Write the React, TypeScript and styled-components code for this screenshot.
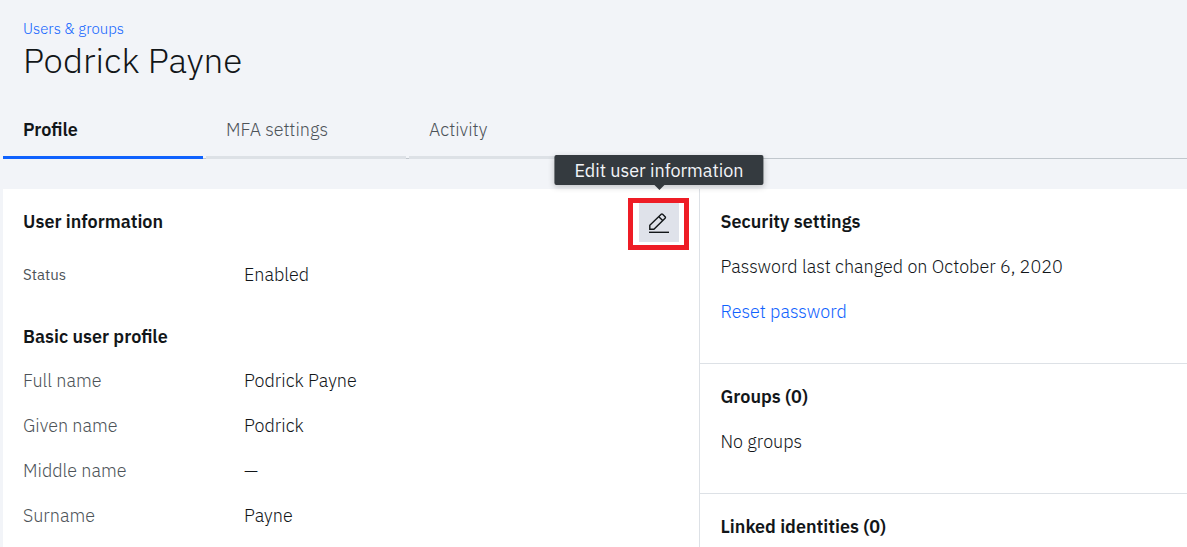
import React from "react";
import styled, { createGlobalStyle } from "styled-components";

const color = {
  page: "#f2f4f8",
  text: "#121619",
  muted: "#4d5358",
  blue: "#0f62fe",
  border: "#dde1e6",
  hover: "#dfe2ea",
  rule: "#c1c7cd",
  tooltip: "#343a3f",
  highlight: "#ee1c25",
};

const GlobalStyle = createGlobalStyle`
  *, *::before, *::after { box-sizing: border-box; }
  body {
    margin: 0;
    background: ${color.page};
    color: ${color.text};
    font-family: "IBM Plex Sans", Roboto, "Liberation Sans", sans-serif;
    font-size: 18px;
    font-weight: 300;
    line-height: 20px;
  }
`;

const Page = styled.div`
  display: flex;
  flex-direction: column;
  min-height: 100vh;
  padding-left: 3px;
`;

const Header = styled.header`
  padding: 19px 20px 0;
`;

const TextLink = styled.a<{ $small?: boolean }>`
  color: ${color.blue};
  text-decoration: none;
  font-size: ${(p) => (p.$small ? 15 : 18)}px;

  &:hover { text-decoration: underline; }
`;

const Breadcrumb = styled.nav`
  display: flex;
`;

const PageTitle = styled.h1`
  margin: 0;
  font-size: 35px;
  font-weight: 300;
  line-height: 42px;
`;

const TabBar = styled.div`
  display: flex;
  gap: 3px;
  margin: 20px 0 30px;
  background: linear-gradient(${color.rule}, ${color.rule}) bottom / 100% 1px no-repeat;
`;

const Tab = styled.button<{ $active?: boolean }>`
  width: 200px;
  padding: 19px 20px 16px;
  border: 0;
  border-bottom: 3px solid ${(p) => (p.$active ? color.blue : color.border)};
  background: none;
  color: ${(p) => (p.$active ? color.text : color.muted)};
  font: inherit;
  font-weight: ${(p) => (p.$active ? 600 : 300)};
  text-align: left;
  cursor: pointer;
`;

const Panels = styled.main`
  display: grid;
  grid-template-columns: 10fr 7fr;
  flex: 1;
  background: #fff;
`;

const Main = styled.section`
  padding: 23px 20px 20px;
`;

const Side = styled.aside`
  border-left: 1px solid ${color.border};
`;

const SideSection = styled.section`
  display: flex;
  flex-direction: column;
  align-items: flex-start;
  gap: 25px;
  padding: 23px 20px 41px;

  & + & { border-top: 1px solid ${color.border}; }
  &:last-child { padding-bottom: 0; }
`;

const Heading = styled.h2`
  margin: 0;
  font-size: 18px;
  font-weight: 600;
  line-height: 20px;
`;

const Text = styled.p`
  margin: 0;
`;

const MainHeader = styled.div`
  display: flex;
  justify-content: space-between;
  height: 20px;
`;

const EditAnchor = styled.div`
  position: relative;
  display: flex;
  align-self: flex-start;
  margin: -14px -10px 0 0;
`;

const Highlight = styled.div`
  padding: 0 5px 3px 6px;
  border: 5px solid ${color.highlight};
`;

const EditButton = styled.button`
  display: flex;
  align-items: center;
  justify-content: center;
  width: 40px;
  height: 39px;
  padding: 0;
  border: 0;
  background: ${color.hover};
  color: ${color.text};
  cursor: pointer;
`;

const Tooltip = styled.span`
  position: absolute;
  bottom: calc(100% + 13px);
  left: 50%;
  transform: translateX(-50%);
  padding: 6px 20px 4px;
  border-radius: 2px;
  background: ${color.tooltip};
  box-shadow: 0 2px 6px rgba(0, 0, 0, 0.2);
  color: #f2f4f8;
  font-weight: 400;
  white-space: nowrap;

  &::after {
    content: "";
    position: absolute;
    top: 100%;
    left: 50%;
    margin-left: -5px;
    border: 5px solid transparent;
    border-top-color: ${color.tooltip};
    border-bottom: 0;
  }
`;

const Fields = styled.dl`
  display: grid;
  gap: 25px;
  margin: 24px 0 0;
`;

const StatusFields = styled(Fields)`
  margin: 33px 0 42px;
`;

const Field = styled.div`
  display: grid;
  grid-template-columns: 221px 1fr;
`;

const Label = styled.dt<{ $small?: boolean }>`
  color: ${color.muted};
  font-size: ${(p) => (p.$small ? 15 : 18)}px;
  font-weight: ${(p) => (p.$small ? 400 : 300)};
`;

const Value = styled.dd`
  margin: 0;
`;

const EditIcon = () => (
  <svg width="20" height="20" viewBox="0 0 20 20" fill="none" stroke="currentColor" aria-hidden="true">
    <path d="M0 19.300h20" strokeWidth="1.400" />
    <path
      d="M.8 16.200v-4L12.200 1.300a1 1 0 0 1 1.400 0l2.500 2.500a1 1 0 0 1 0 1.400L4.900 16.200zM9.800 3.700l3.900 3.900"
      strokeWidth="1.400"
    />
  </svg>
);

const tabs = ["Profile", "MFA settings", "Activity"];

const profile = [
  ["Full name", "Podrick Payne"],
  ["Given name", "Podrick"],
  ["Middle name", "—"],
  ["Surname", "Payne"],
];

export default function App() {
  return (
    <>
      <GlobalStyle />
      <Page>
        <Header>
          <Breadcrumb aria-label="Breadcrumb">
            <TextLink $small href="#users">Users &amp; groups</TextLink>
          </Breadcrumb>
          <PageTitle>Podrick Payne</PageTitle>
        </Header>
        <TabBar role="tablist">
          {tabs.map((name, i) => (
            <Tab key={name} type="button" role="tab" aria-selected={i === 0} $active={i === 0}>
              {name}
            </Tab>
          ))}
        </TabBar>
        <Panels>
          <Main>
            <MainHeader>
              <Heading>User information</Heading>
              <EditAnchor>
                <Tooltip role="tooltip" id="edit-tip">Edit user information</Tooltip>
                <Highlight>
                  <EditButton type="button" aria-labelledby="edit-tip">
                    <EditIcon />
                  </EditButton>
                </Highlight>
              </EditAnchor>
            </MainHeader>
            <StatusFields>
              <Field>
                <Label $small>Status</Label>
                <Value>Enabled</Value>
              </Field>
            </StatusFields>
            <Heading>Basic user profile</Heading>
            <Fields>
              {profile.map(([label, value]) => (
                <Field key={label}>
                  <Label>{label}</Label>
                  <Value>{value}</Value>
                </Field>
              ))}
            </Fields>
          </Main>
          <Side>
            <SideSection>
              <Heading>Security settings</Heading>
              <Text>Password last changed on October 6, 2020</Text>
              <TextLink href="#reset">Reset password</TextLink>
            </SideSection>
            <SideSection>
              <Heading>Groups (0)</Heading>
              <Text>No groups</Text>
            </SideSection>
            <SideSection>
              <Heading>Linked identities (0)</Heading>
            </SideSection>
          </Side>
        </Panels>
      </Page>
    </>
  );
}
